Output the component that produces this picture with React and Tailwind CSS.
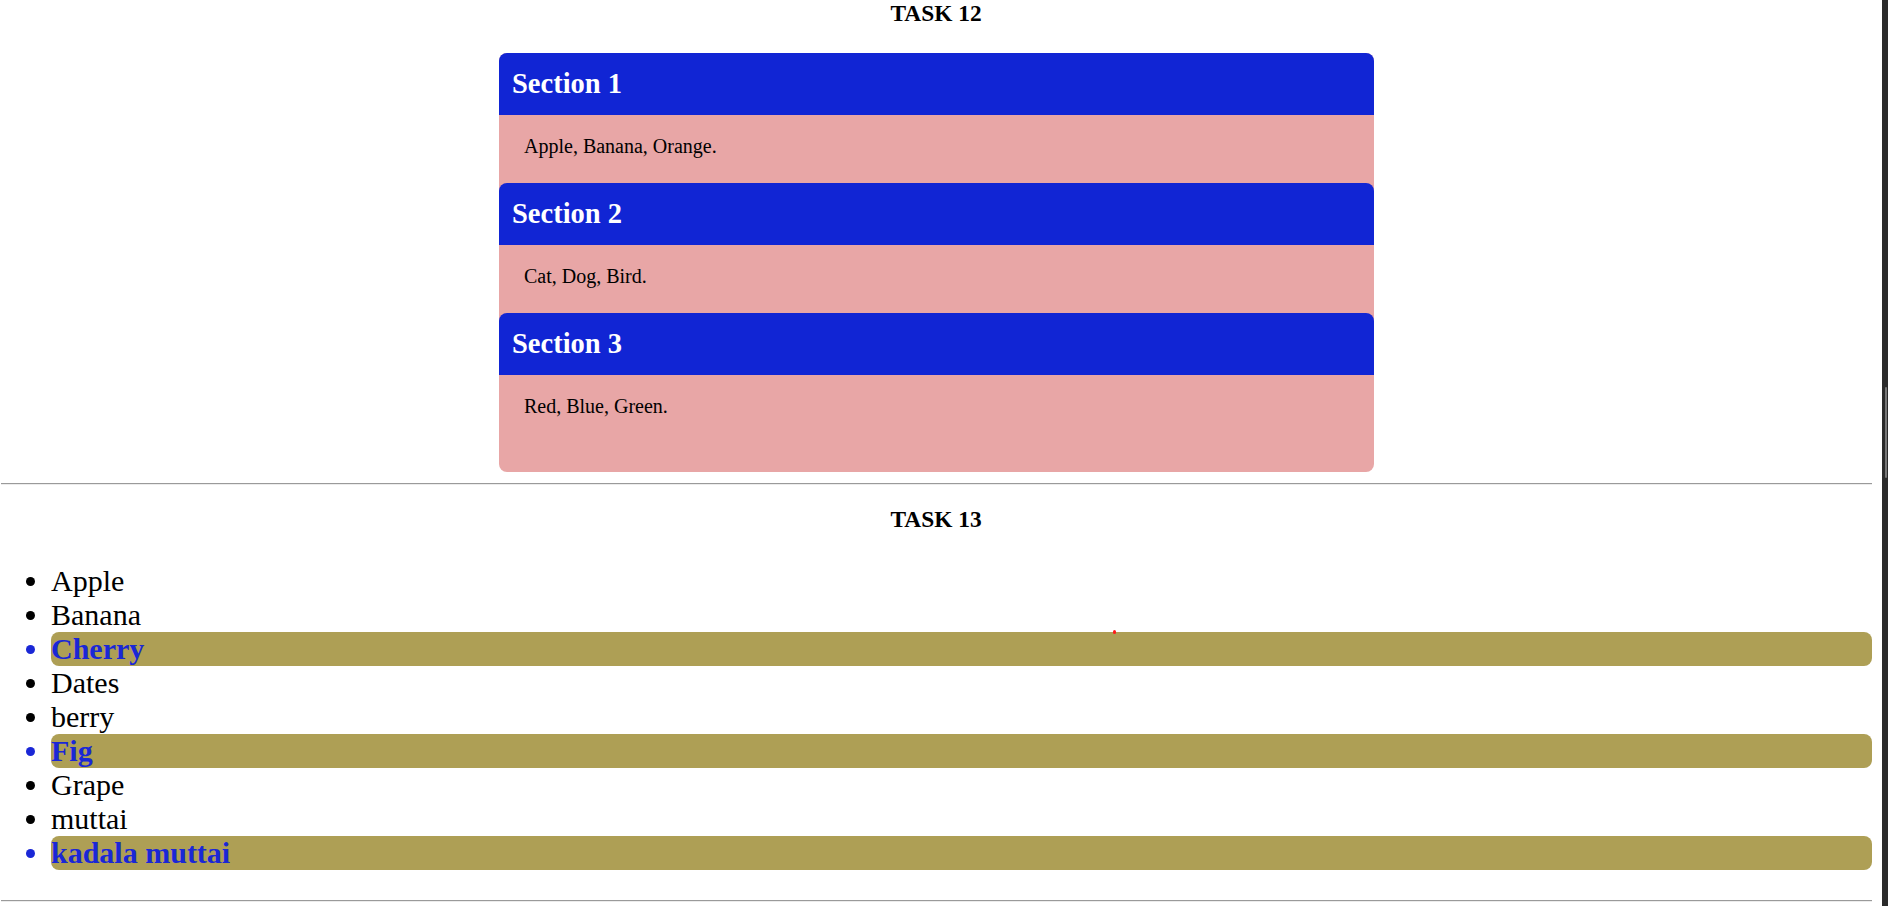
import React from "react";

const sections = [
  { title: "Section 1", body: "Apple, Banana, Orange." },
  { title: "Section 2", body: "Cat, Dog, Bird." },
  { title: "Section 3", body: "Red, Blue, Green." },
];

const items = [
  { t: "Apple" },
  { t: "Banana" },
  { t: "Cherry", hl: true },
  { t: "Dates" },
  { t: "berry" },
  { t: "Fig", hl: true },
  { t: "Grape" },
  { t: "muttai" },
  { t: "kadala muttai", hl: true },
];

export default function App() {
  return (
    <div
      className="relative flex h-[906px] w-[1888px] overflow-hidden bg-white text-black"
      style={{ fontFamily: '"Liberation Serif", "Times New Roman", serif' }}
    >
      <div className="flex w-[1872px] flex-col">
        <div className="flex h-[53px] justify-center">
          <h3 className="text-[23.4px] font-bold leading-[27px]">TASK 12</h3>
        </div>

        <div className="ml-[499px] w-[875px] rounded-[8px] bg-[#e8a6a6] pb-[29px]">
          {sections.map((s) => (
            <div key={s.title}>
              <div className="flex h-[62px] items-center rounded-t-[8px] bg-[#1125d4] px-[13px] text-[28.5px] font-bold leading-[32px] text-white">
                {s.title}
              </div>
              <div className="h-[68px] pl-[25px] pt-[20px] text-[20px] leading-[23px]">
                {s.body}
              </div>
            </div>
          ))}
        </div>

        <div className="ml-[1px] mt-[11px] h-[2px] border-t border-b border-t-[#9a9a9a] border-b-[#ececec]" />

        <div className="mt-[21px] flex justify-center">
          <h3 className="text-[23.4px] font-bold leading-[27px]">TASK 13</h3>
        </div>

        <ul className="mt-[31px] flex flex-col">
          {items.map((it) => (
            <li
              key={it.t}
              className={
                it.hl
                  ? "flex h-[34px] items-center text-[#1a27d6]"
                  : "flex h-[34px] items-center text-black"
              }
            >
              <span className="ml-[26px] h-[9px] w-[9px] rounded-full bg-current" />
              <span
                className={
                  it.hl
                    ? "ml-[16px] flex h-[34px] flex-1 items-center rounded-[8px] bg-[#ae9f55] text-[30px] font-bold leading-[34px]"
                    : "ml-[16px] flex h-[34px] flex-1 items-center text-[30px] leading-[34px]"
                }
              >
                {it.t}
              </span>
            </li>
          ))}
        </ul>

        <div className="ml-[1px] mt-[30px] h-[2px] border-t border-b border-t-[#9a9a9a] border-b-[#ececec]" />
      </div>

      <div className="w-[10px]" />
      <div className="flex w-[6px] flex-col bg-[#2b2b2b] pt-[387px]">
        <div className="ml-[3px] h-[91px] w-[2px] rounded-full bg-[#777]" />
      </div>

      <div className="absolute left-[1113px] top-[630px] h-[4px] w-[3px] rounded-full bg-[#ff1a1a]" />
    </div>
  );
}
